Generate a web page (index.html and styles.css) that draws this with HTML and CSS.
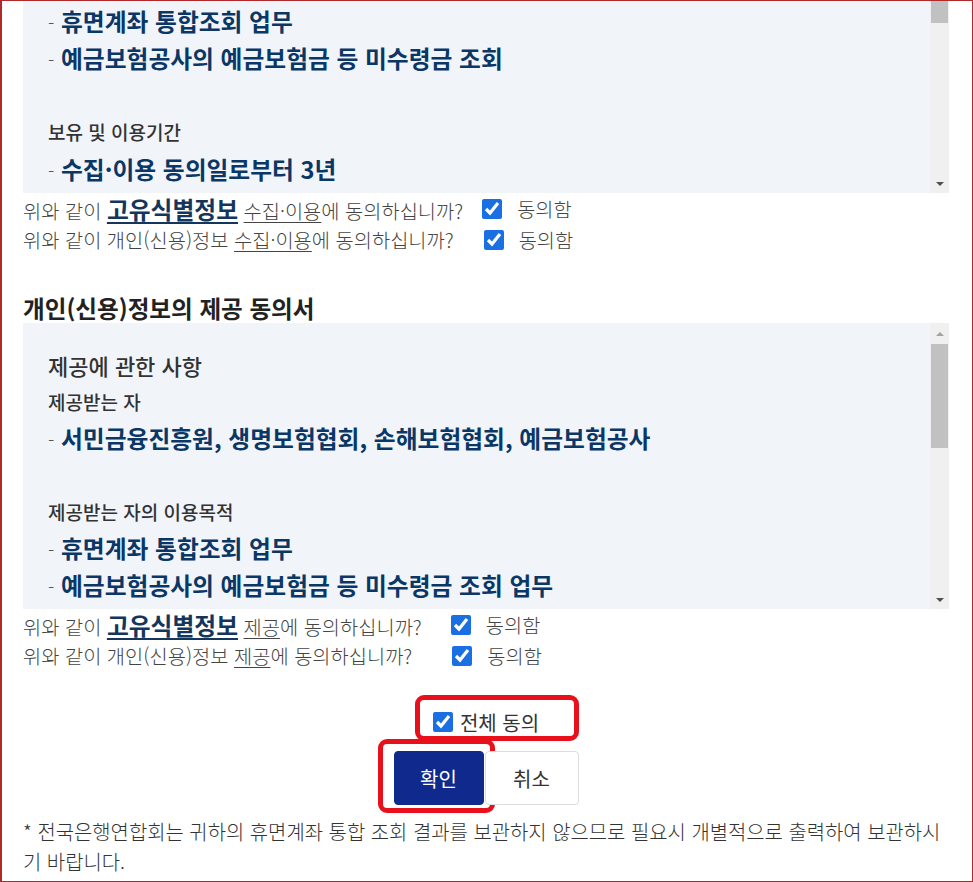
FILE: index.html
```html
<!DOCTYPE html>
<html lang="ko">
<head>
    <meta charset="UTF-8">
    <meta name="viewport" content="width=device-width, initial-scale=1.0">
    <title>개인(신용)정보 동의</title>
    <link rel="stylesheet" href="styles.css">
</head>
<body>
    <div class="frame">
        <div class="scrollbox top-box">
            <div class="scroll-body">
                <p class="line item"><span class="dash">-</span> 휴면계좌 통합조회 업무</p>
                <p class="line item"><span class="dash">-</span> 예금보험공사의 예금보험금 등 미수령금 조회</p>
                <div class="gap"></div>
                <p class="line sub">보유 및 이용기간</p>
                <p class="line item"><span class="dash">-</span> 수집·이용 동의일로부터 3년</p>
            </div>
            <div class="scrollbar">
                <div class="thumb thumb-top"></div>
                <div class="track"></div>
                <div class="arrow down"></div>
            </div>
        </div>

        <div class="agree-row">
            <span class="q">위와 같이 <u class="key">고유식별정보</u> <u>수집·이용</u>에 동의하십니까?</span>
            <label class="chk chk-1"><input type="checkbox" checked> 동의함</label>
        </div>
        <div class="agree-row">
            <span class="q">위와 같이 개인(신용)정보 <u>수집·이용</u>에 동의하십니까?</span>
            <label class="chk chk-2"><input type="checkbox" checked> 동의함</label>
        </div>

        <h2 class="heading">개인(신용)정보의 제공 동의서</h2>

        <div class="scrollbox bottom-box">
            <div class="scroll-body">
                <p class="line title">제공에 관한 사항</p>
                <p class="line sub">제공받는 자</p>
                <p class="line item"><span class="dash">-</span> 서민금융진흥원, 생명보험협회, 손해보험협회, 예금보험공사</p>
                <div class="gap"></div>
                <p class="line sub">제공받는 자의 이용목적</p>
                <p class="line item"><span class="dash">-</span> 휴면계좌 통합조회 업무</p>
                <p class="line item"><span class="dash">-</span> 예금보험공사의 예금보험금 등 미수령금 조회 업무</p>
            </div>
            <div class="scrollbar">
                <div class="arrow up"></div>
                <div class="thumb thumb-mid"></div>
                <div class="track"></div>
                <div class="arrow down"></div>
            </div>
        </div>

        <div class="agree-row">
            <span class="q">위와 같이 <u class="key">고유식별정보</u> <u>제공</u>에 동의하십니까?</span>
            <label class="chk chk-3"><input type="checkbox" checked> 동의함</label>
        </div>
        <div class="agree-row">
            <span class="q">위와 같이 개인(신용)정보 <u>제공</u>에 동의하십니까?</span>
            <label class="chk chk-4"><input type="checkbox" checked> 동의함</label>
        </div>

        <div class="all-agree">
            <label class="all mark-all"><input type="checkbox" checked> 전체 동의</label>
        </div>

        <div class="btns">
            <button class="btn btn-ok mark-ok">확인</button>
            <button class="btn btn-cancel">취소</button>
        </div>

        <p class="note">* 전국은행연합회는 귀하의 휴면계좌 통합 조회 결과를 보관하지 않으므로 필요시 개별적으로 출력하여 보관하시기 바랍니다.</p>
    </div>
</body>
</html>
```

FILE: styles.css
```css
body {
    margin: 0;
    font-family: "Noto Sans CJK KR", "Noto Sans", sans-serif;
    background-color: #fff;
}
.frame {
    height: 882px;
    box-sizing: border-box;
    border: 1px solid #b0292b;
    border-left-width: 2px;
    padding: 0 23px 0 21px;
    overflow: hidden;
}

/* scroll boxes */
.scrollbox {
    display: flex;
    background-color: #f1f5fa;
}
.top-box {
    height: 192px;
}
.bottom-box {
    height: 286px;
}
.scroll-body {
    flex: 1;
    padding-left: 25px;
    overflow: hidden;
}
.top-box .scroll-body {
    padding-top: 1px;
}
.bottom-box .scroll-body {
    padding-top: 24px;
}
.line {
    margin: 0;
    height: 37px;
    line-height: 37px;
    white-space: nowrap;
}
.bottom-box .line {
    height: 36.5px;
    line-height: 36.5px;
}
.gap {
    height: 37px;
}
.item {
    font-size: 23.75px;
    font-weight: 700;
    color: #0b3766;
}
.item .dash {
    font-size: 19px;
    font-weight: 300;
    color: #555;
}
.sub {
    font-size: 19px;
    font-weight: 500;
    color: #333;
}
.title {
    font-size: 22px;
    font-weight: 500;
    color: #333;
}
.scrollbar {
    width: 19px;
    background-color: #f0f0f0;
    display: flex;
    flex-direction: column;
    align-items: center;
}
.track {
    flex: 1;
}
.thumb {
    width: 17px;
    background-color: #c1c1c1;
}
.thumb-top {
    height: 22px;
}
.thumb-mid {
    height: 104px;
    margin-top: 4px;
}
.arrow {
    width: 0;
    height: 0;
    border-left: 4px solid transparent;
    border-right: 4px solid transparent;
}
.arrow.down {
    border-top: 4px solid #505050;
    margin: 6px 0 7px;
}
.arrow.up {
    border-bottom: 4px solid #a3a3a3;
    margin: 9px 0 4px;
}

/* agree rows */
.agree-row {
    display: flex;
    align-items: center;
    height: 31px;
    font-size: 19.8px;
    font-weight: 300;
    color: #444;
}
.agree-row u {
    text-underline-offset: 3px;
}
.key {
    font-size: 23.75px;
    font-weight: 700;
    color: #14365c;
}
.chk {
    display: flex;
    align-items: center;
    gap: 15px;
    margin-left: 19px;
}
.chk-2 {
    margin-left: 30px;
}
.chk-3 {
    margin-left: 29px;
}
.chk-4 {
    margin-left: 40px;
}
input[type="checkbox"] {
    width: 20px;
    height: 20px;
    margin: 0;
    accent-color: #1a6fe2;
}
.heading {
    margin: 38px 0 0;
    font-size: 23.6px;
    font-weight: 700;
    line-height: 30px;
    color: #222;
}

/* bottom actions */
.all-agree {
    display: flex;
    justify-content: center;
    margin-top: 38px;
}
.all {
    position: relative;
    display: inline-flex;
    align-items: center;
    gap: 7px;
    height: 26px;
    font-size: 20px;
    color: #333;
}
.btns {
    display: flex;
    justify-content: center;
    gap: 1px;
    margin-top: 16px;
}
.btn {
    position: relative;
    height: 54px;
    border-radius: 4px;
    font-family: inherit;
    font-size: 20px;
    cursor: pointer;
}
.btn-ok {
    width: 90px;
    background-color: #0f2a8c;
    border: 1px solid #0f2a8c;
    color: #fff;
}
.btn-cancel {
    width: 94px;
    background-color: #fff;
    border: 1px solid #ddd;
    color: #333;
}

/* red highlight marks drawn over the screenshot */
.mark-all::after,
.mark-ok::after {
    content: "";
    position: absolute;
    border: 5px solid #e8101b;
    border-radius: 9px;
    pointer-events: none;
}
.mark-all::after {
    top: -14px;
    bottom: -6px;
    left: -18px;
    right: -40px;
}
.mark-ok::after {
    top: -13px;
    bottom: -9px;
    left: -17px;
    right: -12px;
}

.note {
    margin: 12px 0 0;
    font-size: 19.9px;
    font-weight: 300;
    line-height: 30px;
    color: #333;
}
```
